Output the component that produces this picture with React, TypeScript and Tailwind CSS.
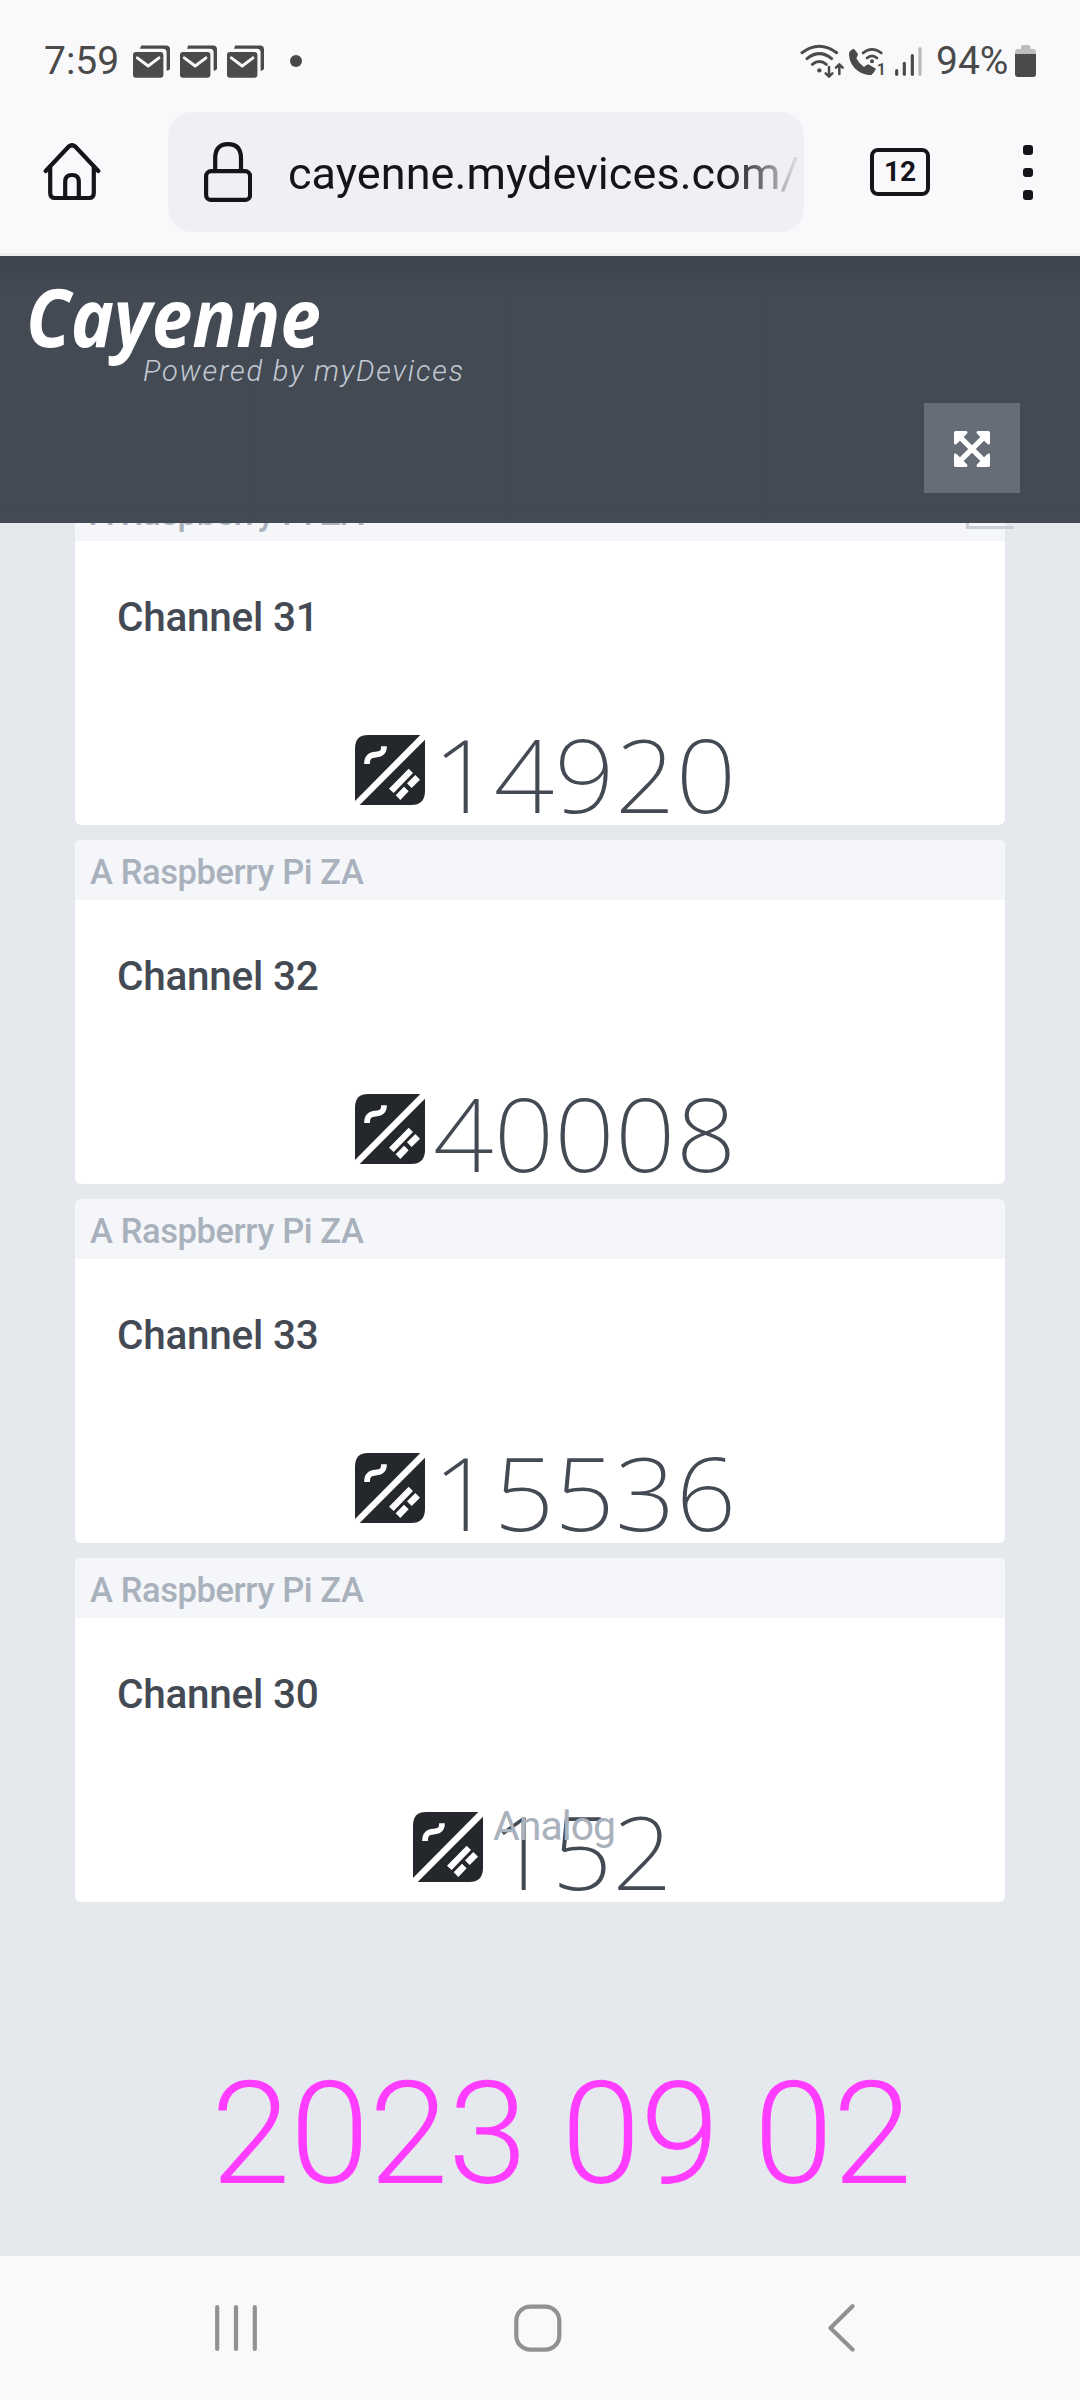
type Channel = { name: string; value: string; caption?: string };

const channels: Channel[] = [
  { name: 'Channel 31', value: '14920' },
  { name: 'Channel 32', value: '40008' },
  { name: 'Channel 33', value: '15536' },
  { name: 'Channel 30', value: '152', caption: 'Analog' },
];

function MailStackIcon() {
  return (
    <svg width="37" height="33" viewBox="0 0 37 33" fill="none">
      <path d="M7 3.8 L8.2 0.6 H33 Q37 0.6 37 4.6 V24 Q36 25.8 33.6 25.8 V7.5 Q33.6 3.8 30 3.8 Z" fill="#4a4a4a" />
      <rect x="0" y="7" width="30.4" height="25.7" rx="3" fill="#4a4a4a" />
      <path d="M4.3 12.8 L15.2 21 L26 12.8" stroke="#f9f9fb" strokeWidth="2.9" strokeLinecap="round" strokeLinejoin="round" />
    </svg>
  );
}

function WifiIcon() {
  return (
    <svg width="46" height="50" viewBox="30 0 138 150" fill="none" stroke="#4a4a4a" strokeWidth="9" strokeLinecap="round" strokeLinejoin="round">
      <path d="M36 50 Q88 12 140 50" />
      <path d="M51 68 Q88 38 125 68" />
      <path d="M67 85 Q88 68 109 85" />
      <circle cx="88" cy="103" r="6.5" fill="#4a4a4a" stroke="none" />
      <path d="M117 93 V121 M107 112 L117 122 L127 112" strokeWidth="7.5" />
      <path d="M148 114 V86 M138 95 L148 85 L158 95" strokeWidth="7.5" />
    </svg>
  );
}

function WifiCallIcon() {
  return (
    <svg width="38" height="50" viewBox="174 0 114 150" fill="none" stroke="#4a4a4a" strokeWidth="8" strokeLinecap="round">
      <path
        d="M181 44 Q186 39 192 38 L204 54 Q203 62 199 67 Q207 83 222 93 Q228 87 235 85 L258 98 Q254 108 244 117 Q226 119 205 106 Q179 87 177 56 Q176 49 181 44 Z"
        fill="#4a4a4a"
        stroke="none"
      />
      <path d="M219 51 Q246 29 274 51" />
      <path d="M231 66 Q246 53 261 66" />
      <circle cx="246" cy="76" r="6" fill="#4a4a4a" stroke="none" />
      <text x="260" y="118" fontFamily="Roboto, sans-serif" fontSize="48" fontWeight="600" fill="#4a4a4a" stroke="none">
        1
      </text>
    </svg>
  );
}

function SignalIcon() {
  return (
    <svg width="30" height="50" viewBox="312 0 90 150" fill="none" stroke="#4a4a4a" strokeWidth="9.5" strokeLinecap="round">
      <path d="M320 104 V115" />
      <path d="M343 82 V115" />
      <path d="M367 59 V115" />
      <path d="M390 38 V115" stroke="#b9b9ba" />
    </svg>
  );
}

function BatteryIcon() {
  return (
    <svg width="21" height="33" viewBox="0 0 21 33">
      <path d="M6 4 V2 Q6 0 8 0 H13.500 Q15.500 0 15.500 2 V4 H18 Q21 4 21 7.500 V9.500 H0 V7.500 Q0 4 3 4 Z" fill="#bdbdbe" />
      <path d="M0 9 H21 V29 Q21 32 18 32 H3 Q0 32 0 29 Z" fill="#4a4a4a" />
    </svg>
  );
}

function HomeIcon() {
  return (
    <svg width="58" height="60" viewBox="0 0 58 60" fill="none" stroke="#15141a" strokeWidth="4.2" strokeLinecap="round" strokeLinejoin="round">
      <path d="M2.700 29 L25.800 4.500 Q29 2 32.200 4.500 L55.300 29" />
      <path d="M7.200 25 V51 Q7.200 56 12 56 H46 Q50.800 56 50.800 51 V25" />
      <path d="M22.200 56 V39.500 Q22.200 33 29 33 Q35.800 33 35.800 39.500 V56" />
    </svg>
  );
}

function LockIcon() {
  return (
    <svg width="48" height="60" viewBox="0 0 48 60" fill="none" stroke="#15141a" strokeWidth="4.2" strokeLinecap="round">
      <rect x="2.100" y="29.200" width="44" height="28.700" rx="5" />
      <path d="M11.200 29 V16.500 Q11.200 2.200 24 2.200 Q37 2.200 37 16.500 V29" />
    </svg>
  );
}

function ExpandIcon() {
  return (
    <svg width="36" height="36" viewBox="128 128 1536 1536" fill="#ffffff" className="mt-[2px]">
      <path d="M1411 541l-355 355 355 355 144-144q29-31 70-14 39 17 39 59v448q0 26-19 45t-45 19h-448q-42 0-59-40-17-39 14-69l144-144-355-355-355 355 144 144q31 30 14 69-17 40-59 40h-448q-26 0-45-19t-19-45v-448q0-42 40-59 39-17 69 14l144 144 355-355-355-355-144 144q-19 19-45 19-12 0-24-5-40-17-40-59v-448q0-26 19-45t45-19h448q42 0 59 40 17 39-14 69l-144 144 355 355 355-355-144-144q-31-30-14-69 17-40 59-40h448q26 0 45 19t19 45v448q0 42-39 59-13 5-25 5-26 0-45-19z" />
    </svg>
  );
}

function ConverterIcon() {
  return (
    <svg width="70" height="70" viewBox="0 0 210 210" className="shrink-0">
      <path d="M40 0 H196 L0 198 V40 Q0 0 40 0 Z" fill="#24272c" />
      <path d="M210 14 V168 Q210 210 168 210 H14 Z" fill="#24272c" />
      <path d="M36 87 C36 66 45 60 62 59 C80 58 87 52 87 34" fill="none" stroke="#ffffff" strokeWidth="17" />
      <path d="M102 161 L161 101 L174 114 L116 174 Z M181 120 L195 134 L170 159 L156 145 Z M147 155 L161 169 L136 195 L122 181 Z" fill="#ffffff" />
    </svg>
  );
}

function StatusBar() {
  return (
    <div className="flex h-[86px] items-end pr-[44px] pl-[44px] text-[39px] leading-none text-[#4a4a4a]">
      <div className="flex h-[50px] items-center">
        <span className="w-[89px]">7:59</span>
        <div className="flex gap-[10px]">
          <MailStackIcon />
          <MailStackIcon />
          <MailStackIcon />
        </div>
        <span className="ml-[26px] size-3 rounded-full bg-[#4a4a4a]" />
      </div>
      <div className="ml-auto flex h-[50px] items-center">
        <WifiIcon />
        <span className="ml-[2px]">
          <WifiCallIcon />
        </span>
        <span className="ml-[8px]">
          <SignalIcon />
        </span>
        <span className="ml-[12px] w-[79px]">94%</span>
        <BatteryIcon />
      </div>
    </div>
  );
}

function BrowserBar() {
  return (
    <div className="flex h-[170px] items-start border-b-[3px] border-[#ededed] pt-[26px] pl-[43px]">
      <div className="flex h-[120px] w-[125px] items-center">
        <HomeIcon />
      </div>
      <div className="flex h-[120px] w-[636px] items-center rounded-[24px] bg-[#f0eff4] pl-[36px]">
        <LockIcon />
        <span className="ml-[36px] bg-linear-to-r from-[#15141a] from-86% to-[#d8d7dd] to-99% bg-clip-text pt-[3px] text-[45px] leading-[60px] tracking-[0.050px] whitespace-nowrap text-transparent">
          cayenne.mydevices.com/
        </span>
      </div>
      <div className="mt-[36px] ml-[66px] flex h-[48px] w-[60px] items-center justify-center rounded-[8px] border-[4px] border-[#15141a] text-[28px] leading-none font-bold text-[#15141a]">
        12
      </div>
      <div className="mt-[33px] ml-[93px] flex flex-col gap-[13px]">
        <span className="size-[9.500px] rounded-[3px] bg-[#15141a]" />
        <span className="size-[9.500px] rounded-[3px] bg-[#15141a]" />
        <span className="size-[9.500px] rounded-[3px] bg-[#15141a]" />
      </div>
    </div>
  );
}

function DashboardHeader() {
  return (
    <header className="relative z-10 flex h-[267px] flex-col bg-[#444a54] bg-linear-to-b from-[#3d444e] to-[#444a54] to-15% pt-[20px] pr-[60px] pl-[26px]">
      <div className="origin-left scale-x-[0.911] font-['Noto_Sans',sans-serif] text-[80px] leading-[80px] font-bold text-white italic">
        Cayenne
      </div>
      <div className="pl-[117px] text-[29px] leading-[30px] font-[350] tracking-[1.830px] text-[#c3cad5] italic">
        Powered by myDevices
      </div>
      <button className="mt-[17px] ml-auto flex h-[90px] w-[96px] items-center justify-center bg-[#676d77]">
        <ExpandIcon />
      </button>
    </header>
  );
}

function ChannelCard({ name, value, caption }: Channel) {
  return (
    <section className="relative h-[344px] overflow-hidden rounded-[6px] bg-white">
      <div className="h-[60px] bg-[#f5f6fa] pt-[4px] pl-[15px] text-[34.500px] leading-[56px] font-medium tracking-[-0.400px] text-[#a9b1bc]">
        A Raspberry Pi ZA
      </div>
      <h2 className="mt-[51px] pl-[42px] text-[40.500px] leading-[50px] font-medium tracking-[-0.250px] text-[#444a54]">{name}</h2>
      <div className="mt-[88px] flex h-[80px] items-center justify-center pl-[6px]">
        <ConverterIcon />
        <span className="ml-[6px] origin-left translate-x-[2px] scale-x-[1.040] pt-[7px] pr-[8px] font-['Noto_Sans',sans-serif] text-[102px] leading-[80px] font-[180] tracking-[0.200px] text-[#444a54]">
          {value}
        </span>
      </div>
      {caption && (
        <span className="absolute top-[243px] left-[418px] text-[41px] leading-[50px] tracking-[-1px] text-[#a9b1bc]">{caption}</span>
      )}
    </section>
  );
}

function NavigationBar() {
  return (
    <nav className="flex h-[144px] items-start bg-[#f9f9fb] pt-[48px] pl-[215px]">
      <svg width="43" height="48" viewBox="0 0 43 48" stroke="#919191" strokeWidth="4.200" strokeLinecap="round">
        <path d="M2.200 3.200 V45 M21 3.200 V45 M39.800 3.200 V45" />
      </svg>
      <svg className="ml-[256px]" width="48" height="48" viewBox="0 0 48 48" fill="none" stroke="#919191" strokeWidth="4.200">
        <rect x="2.300" y="2.700" width="43" height="43" rx="14" />
      </svg>
      <svg className="ml-[265px]" width="30" height="48" viewBox="0 0 30 48" fill="none" stroke="#919191" strokeWidth="4.200" strokeLinecap="round" strokeLinejoin="round">
        <path d="M25.500 2.300 L3.500 24 L25.500 45.500" />
      </svg>
    </nav>
  );
}

export default function App() {
  return (
    <div className="flex h-[2400px] w-[1080px] flex-col overflow-hidden bg-[#f9f9fb] font-[Roboto,sans-serif]">
      <StatusBar />
      <BrowserBar />
      <DashboardHeader />
      <main className="relative h-[1733px] overflow-hidden bg-[#e5e8ec]">
        <div className="mx-[75px] mt-[-42px] flex flex-col gap-[15px]">
          {channels.map((channel) => (
            <ChannelCard key={channel.name} {...channel} />
          ))}
        </div>
        <div className="absolute top-[-42px] left-[966px] size-[48px] border-[3px] border-r-0 border-[#ccced6]" />
        <p className="mt-[157px] pl-[211px] text-[143px] leading-[150px] font-[330] tracking-[-0.350px] whitespace-nowrap text-[#ff3cff]">
          2023 09 02
        </p>
      </main>
      <NavigationBar />
    </div>
  );
}
